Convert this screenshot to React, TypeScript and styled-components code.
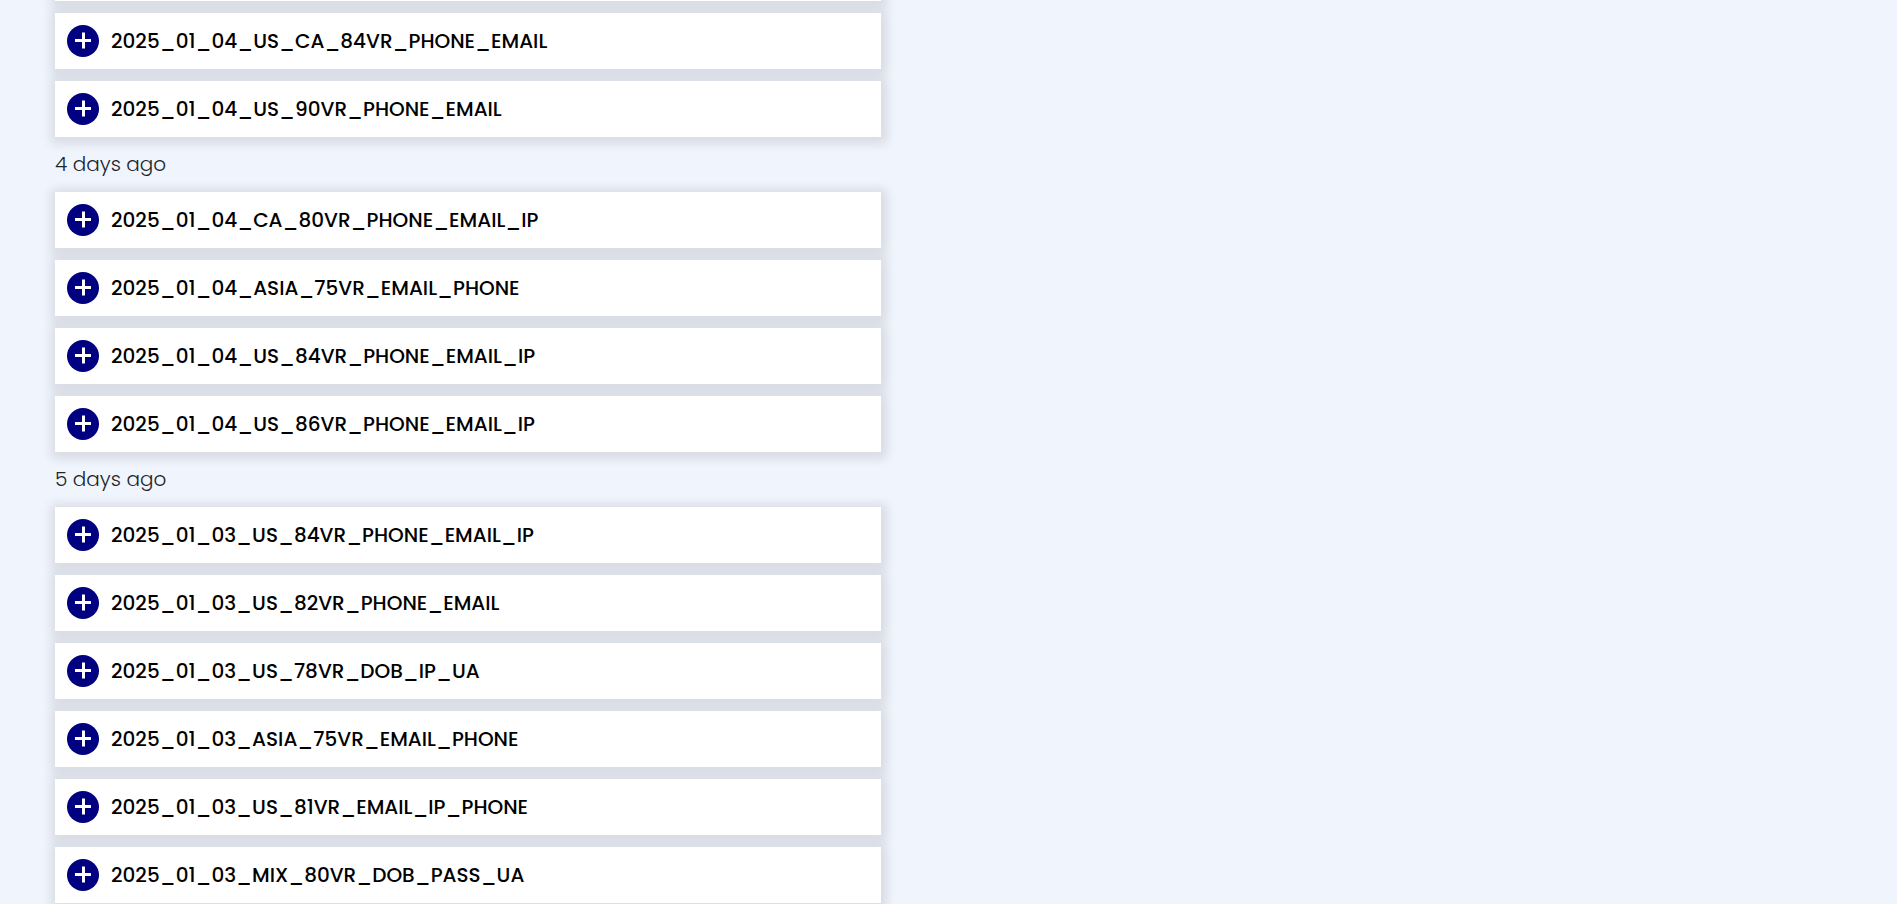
import React, { useState } from 'react';
import styled, { createGlobalStyle } from 'styled-components';

const GlobalStyle = createGlobalStyle`
  *, *::before, *::after { box-sizing: border-box; }
  body {
    margin: 0;
    background: #f0f4fd;
    color: #000;
    font-family: Poppins, Inter, 'Liberation Sans', sans-serif;
  }
`;

const Page = styled.main`
  display: flex;
  min-height: 100vh;
  padding-left: 55px;
  overflow: hidden;
`;

const Feed = styled.div`
  width: calc(50% - 95px);
  min-width: 480px;
`;

const Group = styled.section``;

const DayHeading = styled.h2`
  margin: 0;
  color: #212529;
  font-size: 20px;
  font-weight: 300;
  line-height: 55px;
`;

const Rows = styled.ul`
  display: flex;
  flex-direction: column;
  gap: 12px;
  margin: 0;
  padding: 0;
  list-style: none;
`;

const Row = styled.li`
  background: #fff;
  box-shadow: 1px 2px 10px 5px rgba(0, 0, 0, 0.1);
`;

const RowEdge = styled.div`
  height: 56px;
  margin: -55px 0 12px;
  background: #fff;
  box-shadow: 1px 2px 10px 5px rgba(0, 0, 0, 0.1);
`;

const RowButton = styled.button`
  display: flex;
  align-items: center;
  gap: 12px;
  width: 100%;
  height: 56px;
  padding: 0 12px;
  border: 0;
  background: transparent;
  color: inherit;
  font: inherit;
  font-size: 20px;
  font-weight: 500;
  line-height: 32px;
  text-align: left;
  white-space: nowrap;
  cursor: pointer;
`;

const Badge = styled.svg`
  flex: none;
  width: 32px;
  height: 32px;
`;

const groups = [
  {
    label: '',
    items: ['2025_01_04_US_CA_84VR_PHONE_EMAIL', '2025_01_04_US_90VR_PHONE_EMAIL'],
  },
  {
    label: '4 days ago',
    items: [
      '2025_01_04_CA_80VR_PHONE_EMAIL_IP',
      '2025_01_04_ASIA_75VR_EMAIL_PHONE',
      '2025_01_04_US_84VR_PHONE_EMAIL_IP',
      '2025_01_04_US_86VR_PHONE_EMAIL_IP',
    ],
  },
  {
    label: '5 days ago',
    items: [
      '2025_01_03_US_84VR_PHONE_EMAIL_IP',
      '2025_01_03_US_82VR_PHONE_EMAIL',
      '2025_01_03_US_78VR_DOB_IP_UA',
      '2025_01_03_ASIA_75VR_EMAIL_PHONE',
      '2025_01_03_US_81VR_EMAIL_IP_PHONE',
      '2025_01_03_MIX_80VR_DOB_PASS_UA',
    ],
  },
];

function Entry({ name }: { name: string }) {
  const [open, setOpen] = useState(false);
  return (
    <Row>
      <RowButton type="button" aria-expanded={open} onClick={() => setOpen(!open)}>
        <Badge viewBox="0 0 32 32" aria-hidden="true">
          <circle cx="16" cy="16" r="16" fill="#000080" />
          <path d={open ? 'M8 15.5h16' : 'M8 15.5h16M16.5 7.5v16'} stroke="#fff" strokeWidth="3" />
        </Badge>
        <span>{name}</span>
      </RowButton>
    </Row>
  );
}

export default function App() {
  return (
    <>
      <GlobalStyle />
      <Page>
        <Feed>
          <RowEdge />
          {groups.map((group) => (
            <Group key={group.label}>
              {group.label && <DayHeading>{group.label}</DayHeading>}
              <Rows>
                {group.items.map((item) => (
                  <Entry key={item} name={item} />
                ))}
              </Rows>
            </Group>
          ))}
        </Feed>
      </Page>
    </>
  );
}
